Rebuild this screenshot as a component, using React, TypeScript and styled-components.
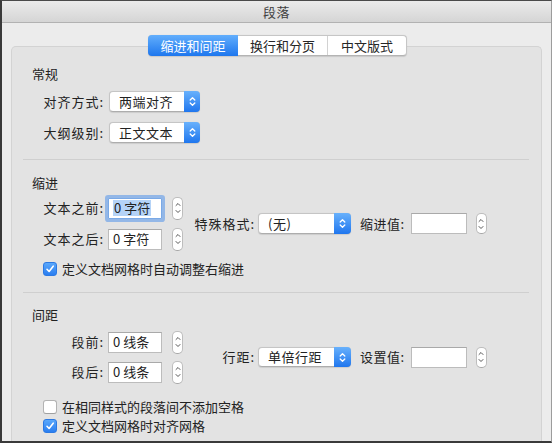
import React from "react";
import styled, { createGlobalStyle, css } from "styled-components";

const FONT = `"Noto Sans CJK SC", "Noto Sans", "DejaVu Sans", sans-serif`;

const GlobalStyle = createGlobalStyle`
  html, body { margin: 0; padding: 0; background: #ececec; }
  body { font-family: ${FONT}; -webkit-font-smoothing: antialiased; }
  * { box-sizing: border-box; }
`;

const Window = styled.div`
  width: 552px;
  height: 443px;
  display: flex;
  flex-direction: column;
  overflow: hidden;
  background: #ececec;
  border-top: 1px solid #4a4a4a;
  border-left: 2px solid #3a3a3a;
  border-bottom: 2px solid #3a3a3a;
  border-right: 1px solid #9c9c9c;
  font-family: ${FONT};
  color: #222;
  font-size: 13px;
`;

const TitleBar = styled.div`
  height: 22px;
  flex: none;
  display: flex;
  align-items: center;
  justify-content: center;
  background: linear-gradient(#ebebeb, #d5d5d5);
  border-bottom: 1px solid #b2b2b2;
  font-size: 13px;
  color: #404040;
  line-height: 16px;
  letter-spacing: 0.5px;
`;

const Body = styled.div`
  flex: 1;
  display: flex;
  flex-direction: column;
  padding: 12px 9px 0 9px;
  min-height: 0;
`;

const Tabs = styled.div`
  align-self: center;
  display: flex;
  height: 21px;
  position: relative;
  z-index: 1;
  margin-bottom: -10px;
  margin-left: 2px;
  background: #fff;
  border: 1px solid #c6c6c6;
  border-bottom-color: #b4b4b4;
  border-radius: 4px;
  box-shadow: 0 0.5px 1px rgba(0, 0, 0, 0.12);
`;

const Tab = styled.div<{ $w: number; $active?: boolean; $divider?: boolean }>`
  width: ${(p) => p.$w}px;
  display: flex;
  align-items: center;
  justify-content: center;
  font-size: 13px;
  line-height: 16px;
  color: #262626;
  ${(p) => p.$divider && css`border-left: 1px solid #d2d2d2;`}
  ${(p) =>
    p.$active &&
    css`
      color: #fff;
      margin: -1px 0 -1px -1px;
      border-radius: 4px 0 0 4px;
      background: linear-gradient(#62aefc, #1e77ee);
    `}
`;

const Panel = styled.div`
  flex: 1;
  display: flex;
  flex-direction: column;
  background: #e3e3e3;
  border: 1px solid #d3d3d3;
  border-bottom: none;
  border-radius: 5px 5px 0 0;
  padding: 19px 0 0 20px;
`;

const Heading = styled.div<{ $top?: number }>`
  height: 16px;
  line-height: 16px;
  font-size: 13px;
  margin-top: ${(p) => p.$top ?? 0}px;
`;

const Separator = styled.div<{ $top: number }>`
  height: 1px;
  background: #cfcfcf;
  margin: ${(p) => p.$top}px 12px 0 -9px;
`;

const Rows = styled.div<{ $top: number; $gap: number }>`
  display: flex;
  flex-direction: column;
  gap: ${(p) => p.$gap}px;
  margin-top: ${(p) => p.$top}px;
`;

const FieldRow = styled.div<{ $h: number }>`
  display: flex;
  align-items: center;
  height: ${(p) => p.$h}px;
`;

const Label = styled.div<{ $w: number }>`
  width: ${(p) => p.$w}px;
  text-align: right;
  line-height: 16px;
  white-space: nowrap;
  letter-spacing: 1px;
  flex: none;
`;

const InlineLabel = styled.div<{ $left: number }>`
  margin-left: ${(p) => p.$left}px;
  line-height: 16px;
  white-space: nowrap;
  letter-spacing: 0.5px;
`;

const Block = styled.div<{ $top: number }>`
  display: flex;
  align-items: center;
  margin-top: ${(p) => p.$top}px;
`;

const RightGroup = styled.div`
  display: flex;
  align-items: center;
  margin-left: 10px;
`;

const PopupBox = styled.div<{ $w: number; $h: number; $left: number }>`
  width: ${(p) => p.$w}px;
  height: ${(p) => p.$h}px;
  margin-left: ${(p) => p.$left}px;
  display: flex;
  background: #fff;
  border: 1px solid #c5c5c5;
  border-bottom-color: #adadad;
  border-radius: 4px;
  box-shadow: 0 0.5px 1px rgba(0, 0, 0, 0.1);
  flex: none;
`;

const PopupText = styled.div`
  flex: 1;
  display: flex;
  align-items: center;
  padding-left: 9px;
  line-height: 16px;
  white-space: nowrap;
  letter-spacing: 0.5px;
`;

const PopupArrows = styled.div<{ $w: number }>`
  width: ${(p) => p.$w}px;
  margin: -1px -1px -1px 0;
  border-radius: 0 4px 4px 0;
  background: linear-gradient(#68b1fc, #1f76ee);
  display: flex;
  align-items: center;
  justify-content: center;
`;

const TextField = styled.div<{ $w: number; $left: number; $focus?: boolean }>`
  width: ${(p) => p.$w}px;
  height: 21px;
  margin-left: ${(p) => p.$left}px;
  background: #fff;
  border: 1px solid #bcbcbc;
  border-top-color: #a9a9a9;
  display: flex;
  align-items: center;
  padding-left: 4px;
  line-height: 16px;
  white-space: nowrap;
  flex: none;
  ${(p) =>
    p.$focus &&
    css`
      border-color: #7aa9e6;
      border-radius: 1px;
      box-shadow: 0 0 0 3px rgba(120, 168, 232, 0.75);
    `}
`;

const Selected = styled.span`
  background: #b5d3f7;
  padding: 0 1px;
`;

const StepperBox = styled.div<{ $left: number; $h: number }>`
  width: 11px;
  height: ${(p) => p.$h}px;
  margin-left: ${(p) => p.$left}px;
  background: #fff;
  border: 1px solid #bdbdbd;
  border-bottom-color: #a8a8a8;
  border-radius: 5px;
  display: flex;
  align-items: center;
  justify-content: center;
  flex: none;
`;

const CheckRow = styled.div<{ $top: number }>`
  display: flex;
  align-items: center;
  height: 16px;
  margin-top: ${(p) => p.$top}px;
  margin-left: 11px;
  gap: 5px;
  line-height: 16px;
`;

const CheckBox = styled.div<{ $checked?: boolean }>`
  width: 14px;
  height: 14px;
  border-radius: 3px;
  flex: none;
  display: flex;
  align-items: center;
  justify-content: center;
  ${(p) =>
    p.$checked
      ? css`
          background: linear-gradient(#5aa8fb, #2a7ef0);
          border: 1px solid #2b79e3;
        `
      : css`
          background: #fff;
          border: 1px solid #b3b3b3;
          border-bottom-color: #a0a0a0;
        `}
`;

const PopupChevrons = () => (
  <svg width="7" height="11" viewBox="0 0 7 11">
    <path d="M1.2 4 L3.5 1.7 L5.8 4 M1.2 7 L3.5 9.3 L5.8 7" fill="none" stroke="#fff" strokeWidth="1.3" strokeLinecap="round" strokeLinejoin="round" />
  </svg>
);

const StepChevrons = () => (
  <svg width="6" height="14" viewBox="0 0 6 14">
    <path d="M1 4.5 L3 2.5 L5 4.5 M1 9.5 L3 11.5 L5 9.5" fill="none" stroke="#555" strokeWidth="1" strokeLinecap="round" strokeLinejoin="round" />
  </svg>
);

const CheckMark = () => (
  <svg width="10" height="10" viewBox="0 0 10 10">
    <path d="M2 5.3 L4.1 7.5 L8.2 2.2" fill="none" stroke="#fff" strokeWidth="1.6" strokeLinecap="round" strokeLinejoin="round" />
  </svg>
);

const Popup = ({ text, w, h, left, arrowW }: { text: string; w: number; h: number; left: number; arrowW: number }) => (
  <PopupBox $w={w} $h={h} $left={left}>
    <PopupText>{text}</PopupText>
    <PopupArrows $w={arrowW}>
      <PopupChevrons />
    </PopupArrows>
  </PopupBox>
);

const Stepper = ({ left, h = 23 }: { left: number; h?: number }) => (
  <StepperBox $left={left} $h={h}>
    <StepChevrons />
  </StepperBox>
);

const Check = ({ checked, label, top }: { checked?: boolean; label: string; top: number }) => (
  <CheckRow $top={top}>
    <CheckBox $checked={checked}>{checked && <CheckMark />}</CheckBox>
    <span>{label}</span>
  </CheckRow>
);

export default function App() {
  return (
    <>
      <GlobalStyle />
      <Window>
        <TitleBar>段落</TitleBar>
        <Body>
          <Tabs>
            <Tab $w={90} $active>缩进和间距</Tab>
            <Tab $w={89}>换行和分页</Tab>
            <Tab $w={79} $divider>中文版式</Tab>
          </Tabs>
          <Panel>
            <Heading>常规</Heading>
            <Rows $top={9} $gap={10}>
              <FieldRow $h={21}>
                <Label $w={72}>对齐方式:</Label>
                <Popup text="两端对齐" w={91} h={21} left={5} arrowW={16} />
              </FieldRow>
              <FieldRow $h={21}>
                <Label $w={72}>大纲级别:</Label>
                <Popup text="正文文本" w={91} h={21} left={5} arrowW={16} />
              </FieldRow>
            </Rows>
            <Separator $top={16} />

            <Heading $top={15}>缩进</Heading>
            <Block $top={5}>
              <Rows $top={0} $gap={7}>
                <FieldRow $h={24}>
                  <Label $w={72}>文本之前:</Label>
                  <TextField $w={54} $left={4} $focus>
                    <Selected>0 字符</Selected>
                  </TextField>
                  <Stepper left={10} />
                </FieldRow>
                <FieldRow $h={24}>
                  <Label $w={72}>文本之后:</Label>
                  <TextField $w={54} $left={4}>0 字符</TextField>
                  <Stepper left={10} />
                </FieldRow>
              </Rows>
              <RightGroup>
                <Label $w={62}>特殊格式:</Label>
                <Popup text="(无)" w={93} h={21} left={3} arrowW={17} />
                <InlineLabel $left={9}>缩进值:</InlineLabel>
                <TextField $w={56} $left={6} />
                <Stepper left={9} h={21} />
              </RightGroup>
            </Block>
            <Check checked label="定义文档网格时自动调整右缩进" top={10} />
            <Separator $top={15} />

            <Heading $top={14}>间距</Heading>
            <Block $top={7}>
              <Rows $top={0} $gap={6}>
                <FieldRow $h={24}>
                  <Label $w={72}>段前:</Label>
                  <TextField $w={54} $left={4}>0 线条</TextField>
                  <Stepper left={10} />
                </FieldRow>
                <FieldRow $h={24}>
                  <Label $w={72}>段后:</Label>
                  <TextField $w={54} $left={4}>0 线条</TextField>
                  <Stepper left={10} />
                </FieldRow>
              </Rows>
              <RightGroup>
                <Label $w={62}>行距:</Label>
                <Popup text="单倍行距" w={93} h={20} left={3} arrowW={17} />
                <InlineLabel $left={9}>设置值:</InlineLabel>
                <TextField $w={56} $left={6} />
                <Stepper left={9} h={21} />
              </RightGroup>
            </Block>
            <Check label="在相同样式的段落间不添加空格" top={15} />
            <Check checked label="定义文档网格时对齐网格" top={3} />
          </Panel>
        </Body>
      </Window>
    </>
  );
}
